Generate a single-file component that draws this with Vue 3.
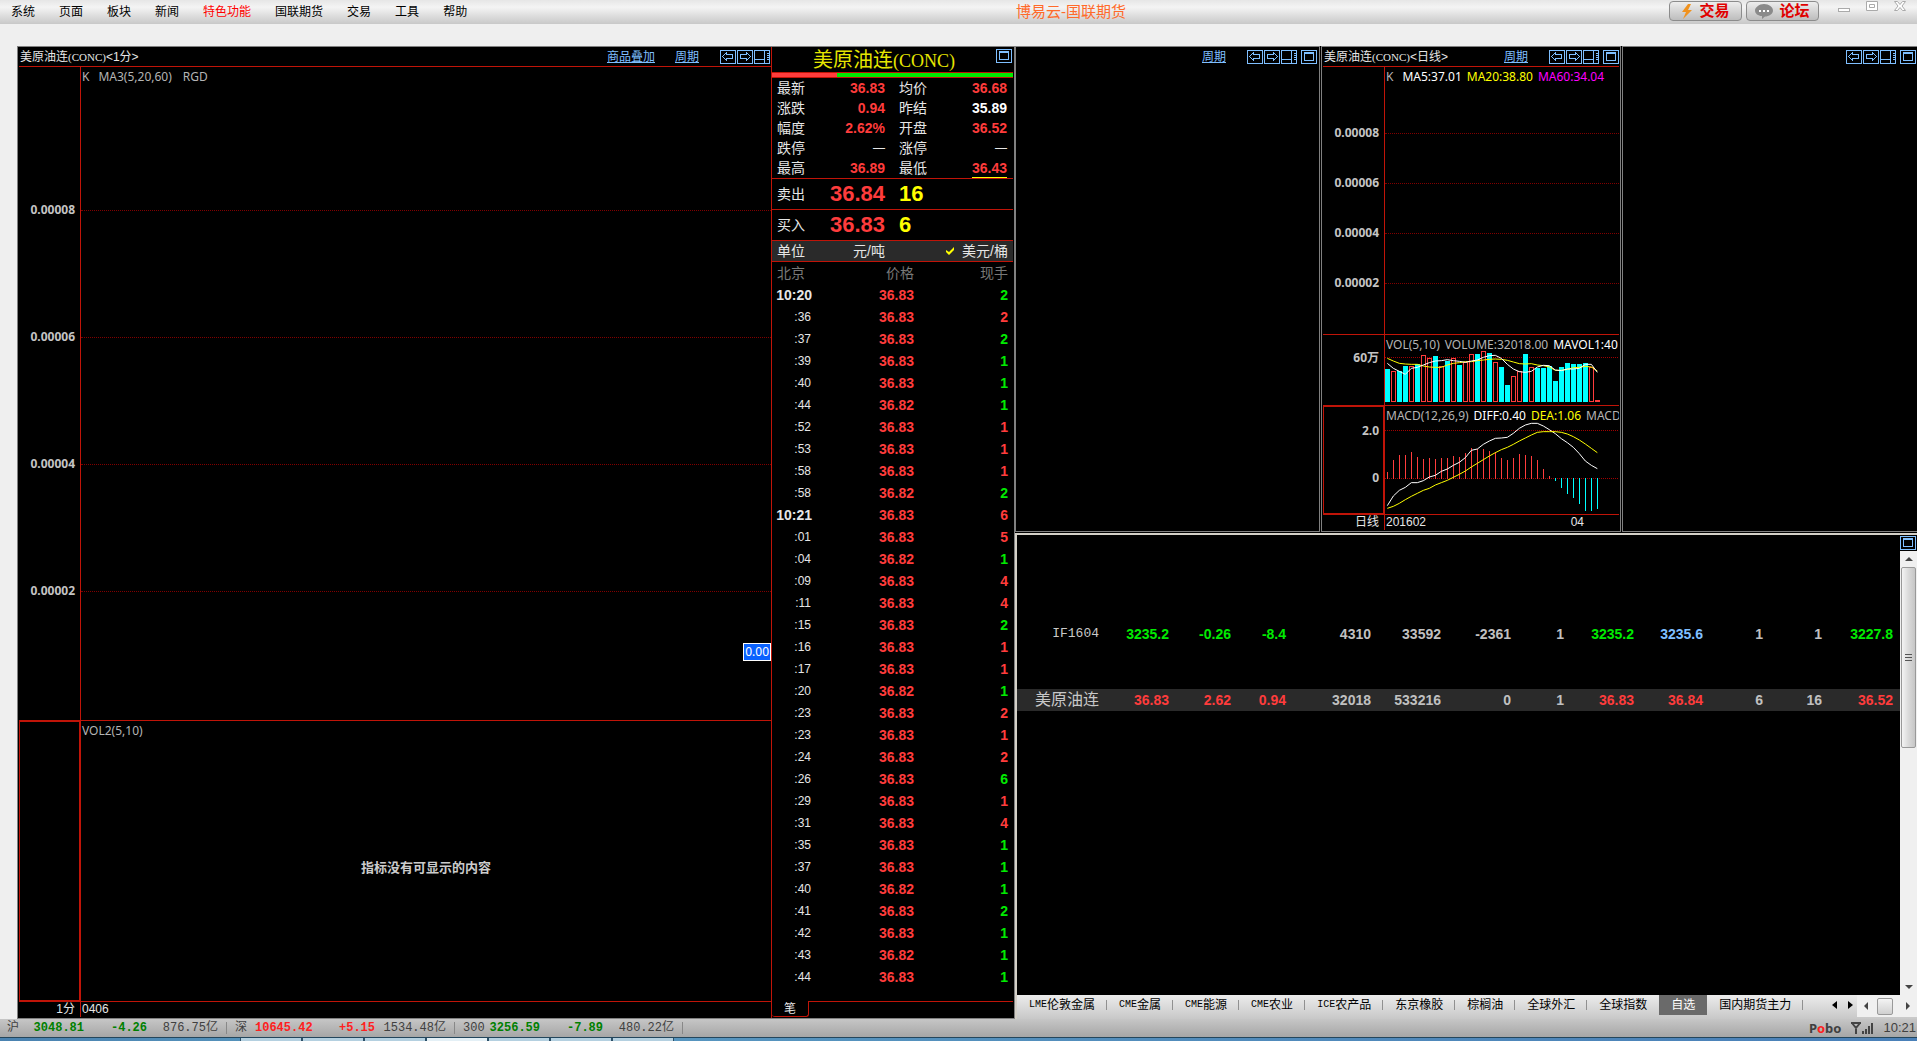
<script setup>
import { h } from 'vue'

const menu = ['系统', '页面', '板块', '新闻', '特色功能', '国联期货', '交易', '工具', '帮助']

const quote = [
  ['最新', '36.83', 'red', '均价', '36.68', 'red'],
  ['涨跌', '0.94', 'red', '昨结', '35.89', 'white'],
  ['幅度', '2.62%', 'red', '开盘', '36.52', 'red'],
  ['跌停', '—', 'none', '涨停', '—', 'none'],
  ['最高', '36.89', 'red', '最低', '36.43', 'red low'],
]

const ticks = `10:20 36.83 2g|:36 36.83 2r|:37 36.83 2g|:39 36.83 1g|:40 36.83 1g|:44 36.82 1g|:52 36.83 1r|:53 36.83 1r|:58 36.83 1r|:58 36.82 2g|10:21 36.83 6r|:01 36.83 5r|:04 36.82 1g|:09 36.83 4r|:11 36.83 4r|:15 36.83 2g|:16 36.83 1r|:17 36.83 1r|:20 36.82 1g|:23 36.83 2r|:23 36.83 1r|:24 36.83 2r|:26 36.83 6g|:29 36.83 1r|:31 36.83 4r|:35 36.83 1g|:37 36.83 1g|:40 36.82 1g|:41 36.83 2g|:42 36.83 1g|:43 36.82 1g|:44 36.83 1g`
  .split('|')
  .map((line) => {
    const [time, price, vol] = line.split(' ')
    return { time, price, vol: vol.slice(0, -1), color: vol.endsWith('g') ? 'green' : 'red' }
  })

const colWidths = [82, 70, 62, 55, 85, 70, 70, 53, 70, 69, 60, 59, 71, 7]
const rows = [
  null, null, null, null,
  {
    name: 'IF1604',
    mono: true,
    cells: [['3235.2', 'green'], ['-0.26', 'green'], ['-8.4', 'green'], ['4310'], ['33592'], ['-2361'], ['1'], ['3235.2', 'green'], ['3235.6', 'blue'], ['1'], ['1'], ['3227.8', 'green']],
  },
  null, null,
  {
    name: '美原油连',
    selected: true,
    cells: [['36.83', 'red'], ['2.62', 'red'], ['0.94', 'red'], ['32018'], ['533216'], ['0'], ['1'], ['36.83', 'red'], ['36.84', 'red'], ['6'], ['16'], ['36.52', 'red']],
  },
]

const tabs = [['LME', '伦敦金属'], ['CME', '金属'], ['CME', '能源'], ['CME', '农业'], ['ICE', '农产品'], ['', '东京橡胶'], ['', '棕榈油'], ['', '全球外汇'], ['', '全球指数'], ['', '自选'], ['', '国内期货主力']]

const indexes = [
  { name: '沪', value: '3048.81', change: '-4.26', amount: '876.75', up: false },
  { name: '深', value: '10645.42', change: '+5.15', amount: '1534.48', up: true },
  { name: '300', value: '3256.59', change: '-7.89', amount: '480.22', up: false },
]

/* Chart series, three units to a pixel, eighteen units to a bar */
const volumes = [98, 92, 92, 107, 107, 113, 140, 131, 137, 107, 122, 131, 110, 119, 143, 144, 152, 146, 119, 104, 50, 77, 92, 143, 104, 102, 102, 107, 62, 104, 116, 113, 113, 116, 104, 5]
const falling = [0, 2, 3, 5, 8, 10, 12, 15, 17, 19, 20, 23, 25, 26, 27, 28, 29, 30, 31, 32, 33]
const volFast = [85, 100, 109, 118, 100, 97, 90, 83, 78, 77, 74, 77, 79, 82, 78, 75, 67, 62, 61, 70, 88, 102, 110, 112, 109, 96, 91, 92, 105, 107, 102, 102, 100, 88, 88, 112]
const volSlow = [70, 78, 85, 87, 88, 88, 93, 96, 97, 97, 90, 85, 83, 80, 80, 77, 75, 73, 72, 73, 76, 81, 86, 87, 86, 90, 92, 96, 106, 106, 103, 98, 97, 94, 96, 108]
const macd = [22, 58, 73, 73, 82, 67, 61, 64, 61, 64, 64, 70, 67, 79, 94, 91, 91, 85, 82, 64, 58, 64, 76, 73, 70, 58, 31, 10, -8, -29, -47, -59, -77, -98, -98, -92]
const diff = [299, 270, 253, 244, 230, 230, 224, 213, 208, 196, 189, 178, 169, 155, 133, 129, 115, 105, 97, 96, 94, 82, 67, 57, 52, 52, 60, 71, 83, 98, 110, 124, 143, 165, 178, 188]
const dea = [307, 301, 292, 281, 271, 262, 253, 247, 237, 230, 223, 214, 205, 195, 183, 172, 161, 150, 140, 131, 124, 115, 105, 96, 87, 79, 77, 77, 77, 79, 84, 92, 102, 114, 127, 140]
const toPoints = (series) => series.map((y, i) => `${i * 18 + 7},${y}`).join(' ')

const box = (kids) => () =>
  h('svg', { width: 16, height: 14, viewBox: '0 0 16 14', fill: 'none', stroke: '#7fbfff', 'shape-rendering': 'crispEdges' }, [
    h('rect', { x: 0.5, y: 0.5, width: 15, height: 13 }),
    ...kids(),
  ])
const arrow = 'M2.5 6.5l4-4v2h6v4h-6v2z'
const PrevIcon = box(() => [h('path', { d: arrow })])
const NextIcon = box(() => [h('path', { d: arrow, transform: 'matrix(-1 0 0 1 16 0)' })])
const SplitIcon = box(() => [h('path', { d: 'M1 9.5h9M10.5 1v12M13 3.5h2M13 5.5h2M13 7.5h2M13 9.5h2' })])
const MaxIcon = box(() => [h('path', { d: 'M3.5 3.5h9v7h-9zM3 2.5h10' })])
</script>

<template>
  <div class="app">
    <header class="menubar">
      <nav class="menu">
        <a v-for="m in menu" :key="m" href="#" :class="{ hot: m === '特色功能' }">{{ m }}</a>
      </nav>
      <h1>博易云-国联期货</h1>
      <div class="tools">
        <button class="tool">
          <svg width="12" height="15" viewBox="0 0 12 15"><path d="M7 0 1 8h4l-3 7 9-9H7l3-6z" fill="#f0921e" /></svg>
          交易
        </button>
        <button class="tool">
          <svg width="18" height="15" viewBox="0 0 18 15"><path d="M9 0c5 0 9 3 9 6.500s-4 6-8 6L7 15v-3C3 12 0 9.500 0 6.500S4 0 9 0z" fill="#8a8a8a" /><path d="M4 6h2v2H4zM8 6h2v2H8zM12 6h2v2h-2z" fill="#fff" /></svg>
          论坛
        </button>
        <div class="win">
          <button aria-label="最小化"><svg width="12" height="12"><rect x=".5" y="7.500" width="11" height="3" fill="#fff" stroke="#aaa" /></svg></button>
          <button aria-label="还原"><svg width="12" height="12"><path d="M.5 .5h11v9H.5zM3.500 3.500h5v3h-5z" fill="#fff" stroke="#aaa" /></svg></button>
          <button aria-label="关闭"><svg width="12" height="12"><path d="M.5 .5h3L6 3.500l2.500-3h3L8 5l3.500 4.500h-3L6 6.500l-2.500 3h-3L4 5z" fill="#fff" stroke="#aaa" /></svg></button>
        </div>
      </div>
    </header>

    <main class="desk">
      <section class="frame left">
        <div class="chart">
          <div class="head">
            <span class="name">美原油连<i>(CONC)</i>&lt;1分&gt;</span>
            <a href="#" class="overlay">商品叠加</a>
            <a href="#" class="period">周期</a>
            <span class="icons"><PrevIcon /><NextIcon /><SplitIcon /></span>
          </div>
          <div class="pane main-pane">
            <div class="axis scale big">
              <span>0.00008</span><span>0.00006</span><span>0.00004</span><span>0.00002</span>
            </div>
            <div class="plot">
              <p class="legend"><span class="k">K</span><span>MA3(5,20,60)</span><span class="gap">RGD</span></p>
              <div class="lines big"><hr /><hr /><hr /><hr /></div>
              <span class="cursor">0.00</span>
            </div>
          </div>
          <div class="pane sub-pane">
            <div class="axis boxed"></div>
            <div class="plot">
              <p class="legend">VOL2(5,10)</p>
              <p class="empty">指标没有可显示的内容</p>
            </div>
          </div>
          <div class="pane foot">
            <div class="axis">1分</div>
            <div class="dates">0406</div>
          </div>
        </div>

        <aside class="quote">
          <div class="qtitle"><h2>美原油连<i>(CONC)</i></h2><MaxIcon /></div>
          <div class="ratio"><span></span></div>
          <div class="facts">
            <template v-for="q in quote" :key="q[0]">
              <span>{{ q[0] }}</span><b :class="q[2]">{{ q[1] }}</b>
              <span class="second">{{ q[3] }}</span><b :class="q[5]">{{ q[4] }}</b>
            </template>
          </div>
          <div class="deal"><span>卖出</span><b class="red">36.84</b><b class="lots">16</b></div>
          <div class="deal"><span>买入</span><b class="red">36.83</b><b class="lots">6</b></div>
          <div class="unit">
            <span>单位</span><span class="ton">元/吨</span>
            <svg width="8" height="8" viewBox="0 0 8 8"><path d="M0 3l3 2 5-5v3L3 8 0 5z" fill="#ff0" /></svg>
            <span>美元/桶</span>
          </div>
          <table class="ticks">
            <thead><tr><th>北京</th><th>价格</th><th>现手</th></tr></thead>
            <tbody>
              <tr v-for="(t, i) in ticks" :key="i">
                <td :class="t.time.length > 3 ? 'minute' : 'second'">{{ t.time }}</td>
                <td class="red">{{ t.price }}</td>
                <td :class="t.color">{{ t.vol }}</td>
              </tr>
            </tbody>
          </table>
          <div class="qfoot"><button>笔</button><span></span></div>
        </aside>
      </section>

      <div class="right">
        <div class="trio">
          <section class="frame">
            <div class="head plain">
              <a href="#" class="period">周期</a>
              <span class="icons"><PrevIcon /><NextIcon /><SplitIcon /></span><MaxIcon />
            </div>
          </section>
          <section class="frame">
            <div class="chart day">
              <div class="head">
                <span class="name">美原油连<i>(CONC)</i>&lt;日线&gt;</span>
                <a href="#" class="period">周期</a>
                <span class="icons"><PrevIcon /><NextIcon /><SplitIcon /></span><MaxIcon />
              </div>
              <div class="pane price">
                <div class="axis scale small">
                  <span>0.00008</span><span>0.00006</span><span>0.00004</span><span>0.00002</span>
                </div>
                <div class="plot">
                  <p class="legend">
                    <span class="k">K</span><span class="white">MA5:37.01</span><span class="yellow">MA20:38.80</span><span class="pink">MA60:34.04</span>
                  </p>
                  <div class="lines small"><hr /><hr /><hr /><hr /></div>
                </div>
              </div>
              <div class="pane vol">
                <div class="axis scale"><span>60万</span></div>
                <div class="plot">
                  <svg viewBox="0 0 702 210" width="234" height="70">
                    <path class="dots" d="M0 67.500h702" />
                    <g shape-rendering="crispEdges">
                      <template v-for="(v, i) in volumes" :key="i">
                        <rect v-if="falling.includes(i)" :x="i * 18" :y="201 - v" width="15" :height="v" fill="#0ff" />
                        <rect v-else :x="i * 18 + 1.5" :y="202 - v" width="12" :height="v - 3" fill="#000" stroke="#ff3c3c" stroke-width="3" />
                      </template>
                    </g>
                    <polyline :points="toPoints(volSlow)" stroke="#ff0" />
                    <polyline :points="toPoints(volFast)" stroke="#fff" />
                  </svg>
                  <p class="legend"><span>VOL(5,10)</span><span>VOLUME:32018.00</span><span class="white">MAVOL1:40</span></p>
                </div>
              </div>
              <div class="pane macd">
                <div class="axis boxed scale"><span>2.0</span><span>0</span></div>
                <div class="plot">
                  <svg viewBox="0 0 702 324" width="234" height="108">
                    <path class="dots" d="M0 73.500h702M0 217.500h702" />
                    <g shape-rendering="crispEdges">
                      <rect v-for="(m, i) in macd" :key="i" :x="i * 18 + 6" :y="m > 0 ? 219 - m : 216" width="3" :height="Math.abs(m)" :fill="m > 0 ? '#ff3c3c' : '#0ff'" />
                    </g>
                    <polyline :points="toPoints(diff)" stroke="#fff" />
                    <polyline :points="toPoints(dea)" stroke="#ff0" />
                  </svg>
                  <p class="legend"><span>MACD(12,26,9)</span><span class="white">DIFF:0.40</span><span class="yellow">DEA:1.06</span><span>MACD</span></p>
                </div>
              </div>
              <div class="pane foot">
                <div class="axis">日线</div>
                <div class="dates"><span>201602</span><span>04</span></div>
              </div>
            </div>
          </section>
          <section class="frame last">
            <div class="head plain">
              <span class="icons"><PrevIcon /><NextIcon /><SplitIcon /></span><MaxIcon />
            </div>
          </section>
        </div>

        <section class="board">
          <div class="sheet">
            <table>
              <colgroup><col v-for="(w, i) in colWidths" :key="i" :width="w" /></colgroup>
              <tbody>
                <tr v-for="(r, i) in rows" :key="i" :class="{ selected: r && r.selected }">
                  <td v-if="!r" :colspan="colWidths.length"></td>
                  <template v-else>
                    <th scope="row" :class="{ mono: r.mono }">{{ r.name }}</th>
                    <td v-for="(c, j) in r.cells" :key="j" :class="c[1] || 'grey'">{{ c[0] }}</td>
                    <td></td>
                  </template>
                </tr>
              </tbody>
            </table>
            <div class="vbar">
              <MaxIcon />
              <button aria-label="向上"><svg width="8" height="4"><path d="M4 0l4 4H0z" fill="#444" /></svg></button>
              <div class="track"><div class="thumb"><i></i><i></i><i></i></div></div>
              <button aria-label="向下"><svg width="8" height="4"><path d="M0 0h8L4 4z" fill="#444" /></svg></button>
            </div>
          </div>
          <nav class="tabs">
            <a v-for="(t, i) in tabs" :key="i" href="#" :class="{ on: t[1] === '自选', nosep: t[1] === '全球指数' }"><i v-if="t[0]">{{ t[0] }}</i>{{ t[1] }}</a>
            <span class="pager">
              <button aria-label="上一组"><svg width="5" height="8"><path d="M5 0v8L0 4z" /></svg></button>
              <button aria-label="下一组"><svg width="5" height="8"><path d="M0 0v8l5-4z" /></svg></button>
            </span>
            <span class="hbar">
              <button aria-label="向左"><svg width="4" height="8"><path d="M4 0v8L0 4z" fill="#444" /></svg></button>
              <span class="hthumb"></span>
              <button aria-label="向右"><svg width="4" height="8"><path d="M0 0v8l4-4z" fill="#444" /></svg></button>
            </span>
          </nav>
        </section>
      </div>
    </main>

    <footer class="status">
      <div v-for="x in indexes" :key="x.name" class="index" :class="x.up ? 'up' : 'down'">
        <span class="label">{{ x.name }}</span><b class="val">{{ x.value }}</b><b class="chg">{{ x.change }}</b><span class="amt">{{ x.amount }}<em>亿</em></span>
      </div>
      <div class="sys">
        <strong>P<span>o</span>bo</strong>
        <svg width="22" height="12" viewBox="0 0 22 12" fill="none" stroke="#444" stroke-width="2"><path d="M0 1h10M1 1l4 5 4-5M5 5v7M12 9v3M15 7v5M18 4v8M21 1v11" /></svg>
        <time>10:21</time>
      </div>
    </footer>
    <div class="taskbar"><span v-for="n in 7" :key="n" :class="{ lit: n === 4 }"></span></div>
  </div>
</template>

<style>
body { margin: 0; background: #efefef; }
</style>

<style scoped>
.app {
  min-height: 100vh;
  display: flex;
  flex-direction: column;
  font: 12px/16px "Liberation Sans", "Noto Sans CJK SC", sans-serif;
  color: #e6e6e6;
}
.app * { box-sizing: border-box; }
button { border: 0; padding: 0; margin: 0; background: none; font: inherit; color: inherit; }
h1, h2, p, hr { margin: 0; font-weight: normal; }
svg { display: block; flex: none; }
i, em { font-style: normal; }
b { font-size: 14px; }
.red { color: #ff3c3c; }
.green { color: #00eb00; }
.blue { color: #7fbfff; }
.grey { color: #c0c0c0; }
.white { color: #fff; }
.yellow { color: #ff0; }
.pink { color: #f0f; }

.menubar {
  height: 24px;
  display: grid;
  grid-template-columns: 1016fr auto 791fr;
  align-items: center;
  background: linear-gradient(#e6e6e6, #f4f4f4 30%, #c8c8c8);
}
.menu { display: flex; gap: 24px; padding-left: 11px; }
.menu a { color: #000; text-decoration: none; }
.menu .hot { color: #f00; }
h1 { font-size: 15px; line-height: 22px; color: #ff6a2a; }
.tools { display: flex; justify-content: flex-end; gap: 4px; height: 24px; padding-top: 1px; }
.tool {
  width: 73px;
  height: 20px;
  display: flex;
  align-items: center;
  justify-content: center;
  gap: 6px;
  border: 1px solid #8c8c8c;
  border-radius: 4px;
  background: linear-gradient(#ededed, #bdbdbd);
  font-size: 15px;
  font-weight: bold;
  line-height: 18px;
  color: #e00000;
}
.win { display: flex; align-items: flex-start; justify-content: space-between; width: 86px; padding: 0 11px 0 7px; margin-left: 8px; }

.desk { flex: 1; display: grid; grid-template-columns: minmax(0, 998fr) minmax(0, 902fr); padding: 22px 0 0 17px; }
.frame { border: 1px solid #808080; background: #000; padding: 0 1px; }
.left { display: flex; }
.right { display: flex; flex-direction: column; background: #000; }
.chart { flex: 1; min-width: 0; display: flex; flex-direction: column; }
.head { height: 20px; flex: none; display: flex; align-items: center; border-bottom: 1px solid #c01408; }
.head.plain { border: 0; justify-content: flex-end; padding-right: 1px; }
.head a { color: #7fbfff; }
.name { flex: 1; padding-left: 1px; white-space: nowrap; }
.name i { font-family: "Liberation Serif", serif; font-size: 11px; }
.overlay { margin-right: 20px; }
.period { margin-right: 21px; }
.icons { display: flex; gap: 1px; }
.left .icons { margin-right: 1px; }
.trio .icons { margin-right: 4px; }

.pane { display: flex; border-bottom: 1px solid #c01408; min-height: 0; }
.main-pane { flex: 654; }
.sub-pane { flex: 281; }
.axis { width: 62px; flex: none; border-right: 1px solid #c01408; text-align: right; padding-right: 5px; }
.boxed { border: 2px solid #c01408; border-left-width: 1px; border-top-width: 1px; border-bottom-width: 1px; }
.scale { font: bold 12px/14px "Noto Sans", "Noto Sans CJK SC", sans-serif; color: #c4c4c4; display: flex; flex-direction: column; }
.plot { flex: 1; min-width: 0; display: grid; grid-template-rows: minmax(0, 1fr); grid-template-columns: minmax(0, 1fr); overflow: hidden; }
.plot > * { grid-area: 1 / 1; }
.legend {
  display: flex;
  gap: 5px;
  padding: 1px 0 0 1px;
  font: 12px/18px "Noto Sans", sans-serif;
  color: #b4b4b4;
  white-space: nowrap;
}
.legend .k { margin-right: 4px; }
.legend .gap { margin-left: 6px; }
.lines { display: flex; flex-direction: column; }
hr { border: 0; border-top: 1px dotted #800000; height: 14px; }
.scale.big { padding-top: 136px; gap: 113px; }
.lines.big { padding-top: 143px; gap: 113px; }
.scale.small { padding-top: 59px; gap: 36px; }
.lines.small { padding-top: 66px; gap: 36px; }
.cursor {
  align-self: end;
  justify-self: end;
  margin-bottom: 59px;
  height: 18px;
  padding: 0 1px;
  border: 1px solid #fff;
  background: #0a62ff;
  color: #fff;
  font: 12px/16px "Noto Sans", sans-serif;
}
.empty { align-self: center; text-align: center; padding-top: 14px; font-size: 13px; font-weight: bold; color: #ccc; }
.foot { border: 0; height: 16px; line-height: 15px; }
.foot .axis { height: 15px; }
.dates { flex: 1; display: flex; justify-content: space-between; padding: 0 35px 0 1px; }

.quote { width: 242px; flex: none; border-left: 1px solid #c01408; font-size: 14px; }
.qtitle { height: 25px; display: flex; align-items: flex-start; padding: 2px 1px 0 0; }
h2 { flex: 1; text-align: center; font-size: 20px; line-height: 22px; color: #e6e600; white-space: nowrap; }
h2 i { font-family: "Liberation Serif", serif; font-size: 18px; }
.ratio { height: 6px; border: solid #c01408; border-width: 1px 0; background: #00eb00; display: flex; }
.ratio span { width: 27%; background: #ff3c3c; }
.facts {
  display: grid;
  grid-template-columns: 28px 80px 42px 80px;
  grid-auto-rows: 20px;
  line-height: 20px;
  padding: 0 5px;
  height: 101px;
  border-bottom: 1px solid #c01408;
}
.facts b { text-align: right; }
.facts .none { font-size: 12px; font-weight: normal; }
.facts .second { padding-left: 14px; }
.facts .low { box-shadow: 0 1px #ff0; justify-self: end; height: 19px; }
.deal { height: 31px; display: flex; align-items: center; padding: 0 5px; border-bottom: 1px solid #c01408; }
.deal b { font-size: 22px; line-height: 30px; width: 80px; text-align: right; }
.deal .lots { text-align: left; padding-left: 14px; color: #ff0; }
.unit { height: 21px; display: flex; align-items: center; gap: 8px; padding: 0 5px; background: #2a2a2a; border-bottom: 1px solid #c01408; }
.unit .ton { width: 72px; margin-right: auto; text-align: right; }
.ticks { width: 100%; border-collapse: collapse; table-layout: fixed; font-weight: bold; line-height: 22px; }
.ticks th, .ticks td { padding: 0; height: 22px; text-align: right; }
.ticks th { font-weight: normal; color: #787878; }
.ticks th:first-child { width: 40px; text-align: left; padding-left: 5px; }
.ticks th:nth-child(2) { width: 102px; }
.ticks th:last-child, .ticks td:last-child { padding-right: 5px; }
.ticks .second { font-size: 12px; font-weight: normal; padding-right: 1px; }
.qfoot { display: flex; height: 17px; margin-top: 13px; }
.qfoot button { width: 37px; height: 16px; font-size: 12px; line-height: 14px; border: 1px solid #c01408; border-top: 0; border-left: 0; border-radius: 0 0 3px 3px; }
.qfoot span { flex: 1; border-top: 1px solid #c01408; }

.trio { display: grid; grid-template-columns: minmax(0, 305fr) minmax(0, 300fr) minmax(0, 295fr); gap: 1px; padding-bottom: 1px; }
.trio .last { border-right: 0; padding-right: 0; }
.day .price { height: 268px; }
.day .vol { height: 71px; }
.day .macd { height: 109px; }
.vol .scale { padding-top: 16px; }
.macd .scale { padding: 17px 4px 0 0; gap: 33px; }
.plot svg { fill: none; stroke-width: 3; }
.dots { stroke: #a00000; stroke-dasharray: 3 3; }

.board { flex: 1; display: flex; flex-direction: column; border: solid #d4d0c8; border-width: 2px 0 0 2px; }
.sheet { flex: 1; display: flex; align-items: stretch; }
.sheet table { flex: 1; align-self: flex-start; border-collapse: collapse; table-layout: fixed; width: 100%; }
.sheet td, .sheet th { height: 22px; padding: 0; text-align: right; font-size: 14px; line-height: 22px; font-weight: bold; }
.sheet th { font-size: 16px; font-weight: normal; color: #c8c8c8; }
.sheet .mono { font: 13px/22px "Liberation Mono", monospace; }
.sheet .selected { background: #2a2a2a; }
.vbar { width: 17px; flex: none; display: flex; flex-direction: column; background: #f0f0f0; }
.vbar > svg { background: #000; outline: 1px solid #000; margin-top: 1px; }
.vbar button { height: 17px; display: flex; align-items: center; justify-content: center; }
.track { flex: 1; }
.thumb {
  height: 44%;
  margin: 0 1px;
  border: 1px solid #999;
  border-radius: 2px;
  background: linear-gradient(90deg, #f4f4f4, #dadada 50%, #c6c6c6);
  display: flex;
  flex-direction: column;
  align-items: center;
  justify-content: center;
  gap: 2px;
}
.thumb i { width: 7px; height: 1px; background: #555; }
.tabs { height: 24px; flex: none; display: flex; background: linear-gradient(#ececec, #c8c8c8); padding-bottom: 4px; }
.tabs a {
  display: flex;
  align-items: center;
  padding: 0 12px;
  color: #000;
  text-decoration: none;
  white-space: nowrap;
  background: linear-gradient(#909090, #909090) right center / 1px 10px no-repeat;
}
.tabs a i { font: 10px/16px "Liberation Mono", monospace; }
.tabs .on { color: #fff; background: #6a6a6a; }
.tabs .nosep { background: none; }
.pager { margin-left: auto; display: flex; gap: 11px; align-items: center; padding-right: 4px; }
.hbar { width: 60px; height: 22px; background: #f0f0f0; display: flex; align-items: center; justify-content: space-between; padding: 0 7px; }
.hthumb { width: 16px; height: 17px; border: 1px solid #999; border-radius: 2px; background: linear-gradient(#f4f4f4, #d0d0d0); margin-right: 5px; }

.status {
  height: 18px;
  flex: none;
  display: flex;
  align-items: center;
  padding-right: 1px;
  background: linear-gradient(#c6c6c6, #a6a6a6);
  color: #404040;
  font: 12px/18px "Liberation Mono", "Noto Sans CJK SC", monospace;
}
.index { width: 228px; display: flex; padding: 0 10px 0 7px; background: linear-gradient(#888, #888) right 1px center / 1px 12px no-repeat; }
.index b { font-size: 12px; text-align: right; }
.label { width: 20px; }
.val { width: 57px; }
.chg { width: 63px; }
.amt { flex: 1; text-align: right; }
.down b { color: #008000; }
.up b { color: #ff2020; }
.sys { margin-left: auto; display: flex; align-items: center; gap: 10px; font: 13px/18px "Liberation Sans", sans-serif; }
.sys strong { font: bold 13px/18px "Noto Sans", sans-serif; }
.sys strong span { color: #ff2020; }
.taskbar { height: 4px; flex: none; border-top: 1px solid #24465c; background: linear-gradient(90deg, #4a82b0, #5a9ac0 20%, #4a80b8); display: flex; padding-left: 240px; }
.taskbar span { width: 62px; border: solid #2c5068; border-width: 0 1px; background: #b4d0e0; }
.taskbar .lit { background: #e4f0f6; }
</style>
